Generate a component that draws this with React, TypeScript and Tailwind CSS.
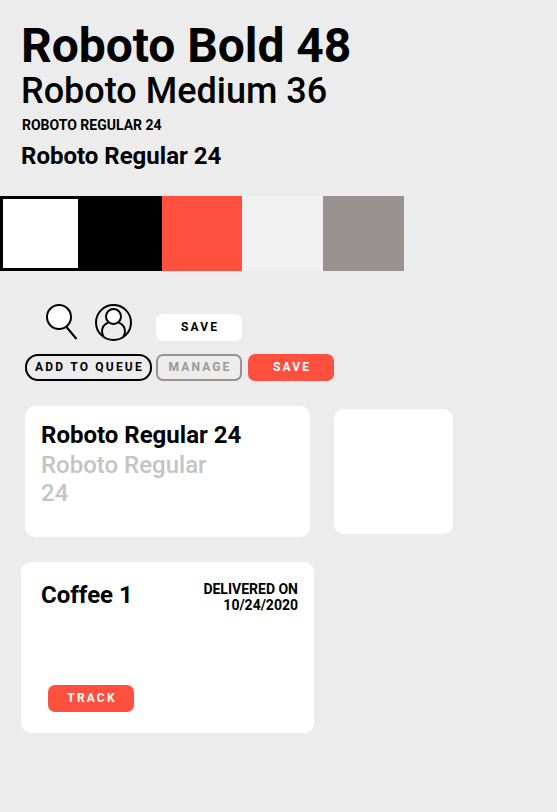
export default function App() {
  const swatches = [
    'w-[81px] bg-white border-[3px] border-black',
    'w-[81px] bg-black',
    'w-[80px] bg-[#ff503f]',
    'w-[81px] bg-[#f1f1f1]',
    'w-[81px] bg-[#989391]',
  ];
  const btn = 'flex h-[27px] w-[86px] items-center justify-center rounded-[7px] pb-[2px] pl-[2px] text-xs font-bold tracking-[2.16px]';
  return (
    <main className="h-[812px] w-full overflow-hidden bg-[#ececec] font-['Roboto',sans-serif] text-black">
      <header className="h-[196px] whitespace-nowrap pl-[21px] pt-[18px]">
        <h1 className="text-[48px] font-bold leading-[56px] tracking-[-0.05px]">Roboto Bold 48</h1>
        <h2 className="-mt-px text-[36px] font-medium leading-[36px]">Roboto Medium 36</h2>
        <p className="mt-[8px] pl-px text-sm font-bold leading-4">ROBOTO REGULAR 24</p>
        <p className="mt-[9px] text-2xl font-bold leading-7">Roboto Regular 24</p>
      </header>
      <div className="flex h-[75px]">
        {swatches.map((s) => <div key={s} className={s} />)}
      </div>
      <div className="mt-[33px] flex h-[37px] pl-[46px]">
        <svg width="32" height="37" fill="none" stroke="black" strokeWidth="2">
          <circle cx="13" cy="13" r="12" fill="white" />
          <path d="M20.500 23L30.5 35" />
        </svg>
        <svg className="ml-[17px]" width="37" height="37" fill="none" stroke="black" strokeWidth="2">
          <circle cx="18.5" cy="18.5" r="17.5" />
          <circle cx="18.5" cy="12.5" r="7.5" fill="white" />
          <path d="M13.5 18.3C9.500 20 7 23.500 7 27.500C7 29.500 7.500 31 8.700 32.800M23.500 18.300C27.500 20 30 23.500 30 27.500C30 29.500 29.500 31 28.300 32.800" />
        </svg>
        <button className={`${btn} ml-[24px] mt-[10px] bg-white`}>SAVE</button>
      </div>
      <div className="mt-[13px] flex pl-[25px]">
        <button className="flex h-[27px] w-[127px] items-center justify-center whitespace-nowrap rounded-[13px] border-2 border-black pb-[2px] pl-[2px] text-xs font-bold tracking-[2.2px]">ADD TO QUEUE</button>
        <button className={`${btn} ml-[4px] border-2 border-[#989391] text-[#999999]`}>MANAGE</button>
        <button className={`${btn} ml-[6px] bg-[#ff503f] text-white`}>SAVE</button>
      </div>
      <div className="mt-[25px] flex">
        <section className="ml-[25px] h-[131px] w-[285px] rounded-[10px] bg-white px-4 pt-[15px] text-2xl leading-7">
          <h3 className="font-bold">Roboto Regular 24</h3>
          <p className="mt-[2px] w-[190px] font-medium text-[#c4c4c4]">Roboto Regular 24</p>
        </section>
        <div className="ml-6 mt-[3px] h-[125px] w-[119px] rounded-[10px] bg-white" />
      </div>
      <section className="ml-[21px] mt-[25px] h-[171px] w-[293px] rounded-[10px] bg-white pl-5 pr-4 pt-[19px]">
        <div className="flex h-[104px] justify-between">
          <h3 className="text-2xl font-bold leading-7">Coffee 1</h3>
          <p className="text-right text-sm font-bold leading-4">DELIVERED ON<br />10/24/2020</p>
        </div>
        <button className={`${btn} ml-[7px] bg-[#ff503f] text-white`}>TRACK</button>
      </section>
    </main>
  );
}
